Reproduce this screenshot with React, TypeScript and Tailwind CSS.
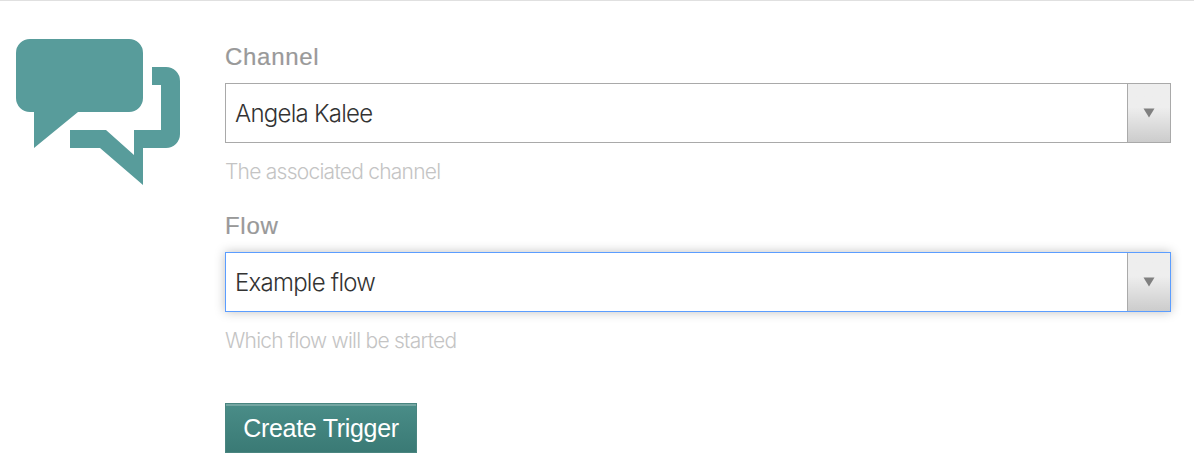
function Arrow() {
  return (
    <svg width="12" height="10" viewBox="0 0 12 10" className="block">
      <path d="M0.5 0.5H11.5L6 9.5Z" fill="#808080" />
    </svg>
  );
}

function Field({ label, value, help, focused }: { label: string; value: string; help: string; focused?: boolean }) {
  return (
    <div className="flex flex-col">
      <div className="h-[28px] text-[24px] leading-[28px] tracking-[0.7px] text-[#999999] [-webkit-text-stroke:0.2px_#999999]">{label}</div>
      <div
        className={
          focused
            ? "mt-[12px] flex h-[60px] border border-[#5b9dff] bg-white shadow-[0_0_10px_rgba(0,0,0,0.25)]"
            : "mt-[12px] flex h-[60px] border border-[#a9a9a9] bg-white"
        }
      >
        <div className="flex-1 pl-[9px] font-['Inter',sans-serif] text-[24px] font-light leading-[60px] tracking-[-0.75px] text-[#333333]">{value}</div>
        <div className="flex w-[43px] items-center justify-center border-l border-[#aaaaaa] bg-gradient-to-b from-[#eeeeee] from-40% to-[#cccccc]">
          <Arrow />
        </div>
      </div>
      <div className="mt-[14px] h-[28px] font-['Inter',sans-serif] text-[21px] font-light leading-[30px] tracking-[-0.75px] text-[#c4c4c4]">{help}</div>
    </div>
  );
}

export default function App() {
  return (
    <div className="h-[470px] w-[1194px] overflow-hidden border-t border-[#e0e0e0] bg-white font-['Liberation_Sans',sans-serif]">
      <div className="flex pl-[16px] pr-[23px] pt-[38px]">
        <div className="w-[209px] shrink-0">
          <svg width="164" height="146" viewBox="16 39 164 146" className="block">
            <path
              fill="#589c9b"
              d="M30 39H129A14 14 0 0 1 143 53V98A14 14 0 0 1 129 112H78L34 148V112H30A14 14 0 0 1 16 98V53A14 14 0 0 1 30 39Z"
            />
            <path
              fill="#589c9b"
              d="M152 67H166A14 14 0 0 1 180 81V134A14 14 0 0 1 166 148H143V185L100 148H70V130H106L134 155V130H161V85H152Z"
            />
          </svg>
        </div>
        <div className="flex flex-1 flex-col">
          <div className="flex flex-col gap-[27px] pt-[4px]">
            <Field label="Channel" value="Angela Kalee" help="The associated channel" />
            <Field label="Flow" value="Example flow" help="Which flow will be started" focused />
          </div>
          <div className="mt-[49px] flex">
            <button className="h-[50px] w-[192px] border border-[#4a8580] bg-gradient-to-b from-[#4a8d88] to-[#3a7a75] text-[25px] leading-[48px] tracking-[-0.3px] text-white shadow-[inset_0_2px_0_#74a6a2]">
              Create Trigger
            </button>
          </div>
        </div>
      </div>
    </div>
  );
}
